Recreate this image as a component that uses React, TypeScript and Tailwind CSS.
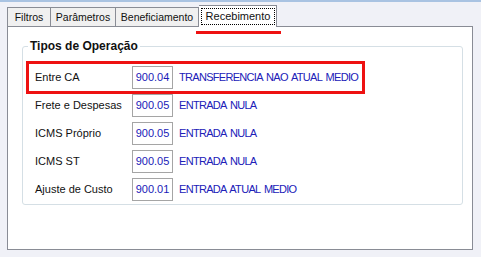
import React from "react";

const rows = [
  { label: "Entre CA", code: "900.04", desc: "TRANSFERENCIA NAO ATUAL MEDIO" },
  { label: "Frete e Despesas", code: "900.05", desc: "ENTRADA NULA" },
  { label: "ICMS Próprio", code: "900.05", desc: "ENTRADA NULA" },
  { label: "ICMS ST", code: "900.05", desc: "ENTRADA NULA" },
  { label: "Ajuste de Custo", code: "900.01", desc: "ENTRADA ATUAL MEDIO" },
];

export default function App() {
  return (
    <div
      className="relative h-[257px] w-[481px] overflow-hidden border-t-2 border-[#a9c3e2] bg-[#f0f1f7] text-[11px] text-[#111]"
      style={{ fontFamily: "'Liberation Sans', Arial, sans-serif" }}
    >
      <div className="ml-[7px] mt-[3px] flex items-end text-[10.5px]">
        <div className="h-[19px] w-[43px] border border-b-0 border-r-0 border-[#898c95] bg-[#f0f0f0] text-center leading-[18px]">Filtros</div>
        <div className="h-[19px] w-[65px] border border-b-0 border-r-0 border-[#898c95] bg-[#f0f0f0] text-center leading-[18px]">Parâmetros</div>
        <div className="h-[19px] w-[84px] border border-b-0 border-[#898c95] bg-[#f0f0f0] text-center leading-[18px]">Beneficiamento</div>
        <div className="relative z-10 -mb-px h-[22px] w-[78px] border border-b-0 border-l-0 border-[#898c95] bg-white pl-[2px] pr-[1px] pt-[2px]">
          <div className="border border-dotted border-black text-center text-[11px] leading-[15px]">Recebimento</div>
        </div>
      </div>

      <div className="ml-[7px] h-[224px] w-[466px] border border-[#898c95] bg-white px-[14px] pt-[12px]">
        <fieldset className="h-[166px] w-[441px] rounded-[3px] border border-[#d5dfe5] px-[12px] pt-[13px]">
          <legend className="ml-[-7px] px-[2px] text-[12px] font-bold leading-[14px] text-[#111]">Tipos de Operação</legend>
          <div className="flex flex-col gap-[5px]">
            {rows.map((r) => (
              <div key={r.label} className="flex h-[23px] items-center">
                <div className="w-[97px]">{r.label}</div>
                <div className="flex h-[23px] w-[41px] items-center justify-center border border-[#a5a5a5] text-[#1a1ab8]">
                  {r.code}
                </div>
                <div className="ml-[6px] tracking-[-0.7px] text-[#2020b8] [word-spacing:1.5px]">{r.desc}</div>
              </div>
            ))}
          </div>
        </fieldset>
      </div>

      {/* destaques em vermelho */}
      <div className="absolute left-[196px] top-[29px] h-[3px] w-[85px] bg-[#ee1111]" />
      <div className="absolute left-[26px] top-[59px] h-[33px] w-[339px] border-[3px] border-[#ee1111]" />
    </div>
  );
}
